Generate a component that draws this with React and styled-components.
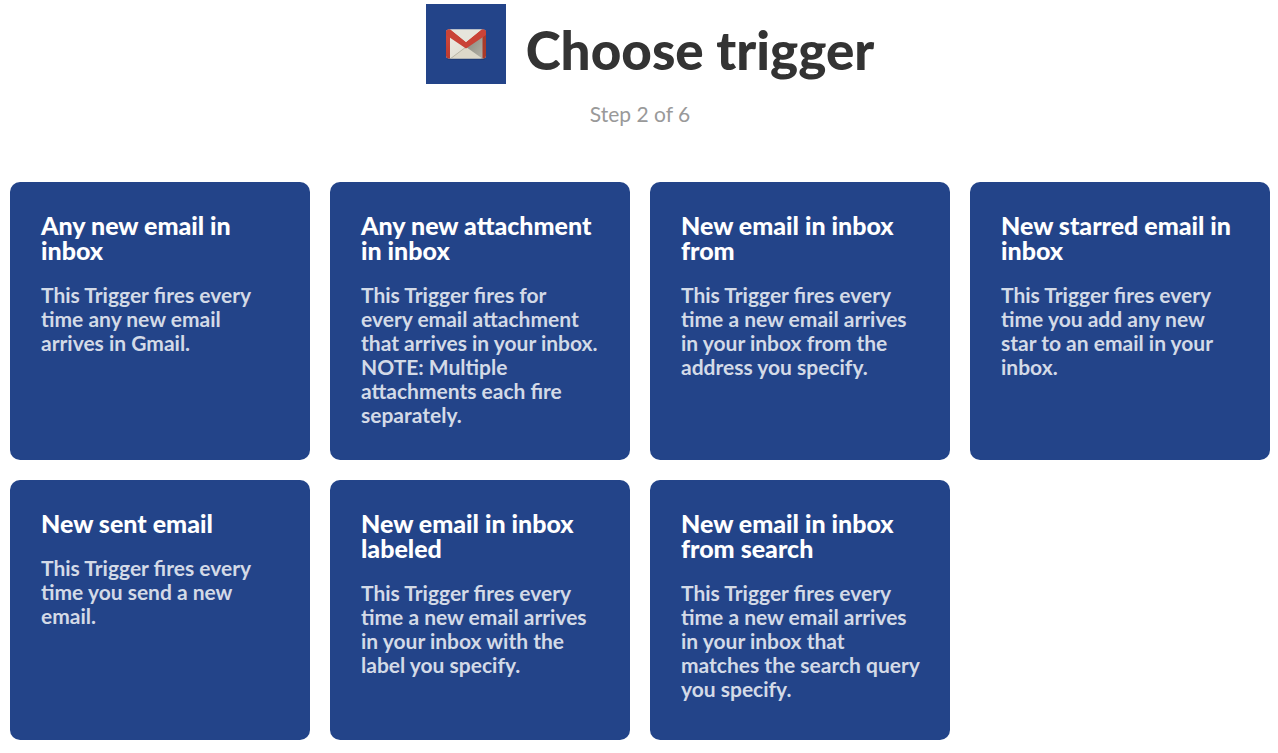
import React from 'react';
import styled, { createGlobalStyle } from 'styled-components';

const GlobalStyle = createGlobalStyle`
  *, *::before, *::after { box-sizing: border-box; }
  body {
    margin: 0;
    background: #fff;
    color: #333;
    font-family: Lato, "Open Sans", sans-serif;
  }
`;

const Page = styled.main`
  padding: 4px 8px 12px 10px;
`;

const Header = styled.header`
  display: flex;
  flex-direction: column;
  align-items: center;
  margin-bottom: 56px;
`;

const Heading = styled.div`
  display: flex;
  align-items: center;
  gap: 20px;
  padding-left: 20px;
`;

const ServiceTile = styled.span`
  display: flex;
  align-items: center;
  justify-content: center;
  width: 80px;
  height: 80px;
  background: #234489;
`;

const Title = styled.h1`
  margin: 0;
  padding-top: 12px;
  font-size: 53px;
  line-height: 64px;
  font-weight: 900;
`;

const Step = styled.p`
  margin: 18px 0 0;
  font-size: 21px;
  line-height: 24px;
  color: #999;
`;

const TriggerGrid = styled.ul`
  display: grid;
  grid-template-columns: repeat(4, minmax(0, 1fr));
  gap: 20px;
  margin: 0;
  padding: 0;
  list-style: none;
`;

const TriggerItem = styled.li`
  display: flex;
`;

const TriggerCard = styled.a`
  flex: 1;
  min-height: 260px;
  padding: 31px 30px 33px 31px;
  border-radius: 10px;
  background: #234489;
  color: #fff;
  text-decoration: none;
`;

const TriggerName = styled.h2`
  margin: 0 0 20px;
  font-size: 25px;
  line-height: 25px;
  font-weight: 900;
`;

const TriggerText = styled.p`
  margin: 0;
  font-size: 21px;
  line-height: 24px;
  font-weight: 700;
  color: #d3dae7;
`;

const triggers = [
  {
    name: 'Any new email in inbox',
    text: 'This Trigger fires every time any new email arrives in Gmail.',
  },
  {
    name: 'Any new attachment in inbox',
    text: 'This Trigger fires for every email attachment that arrives in your inbox. NOTE: Multiple attachments each fire separately.',
  },
  {
    name: 'New email in inbox from',
    text: 'This Trigger fires every time a new email arrives in your inbox from the address you specify.',
  },
  {
    name: 'New starred email in inbox',
    text: 'This Trigger fires every time you add any new star to an email in your inbox.',
  },
  {
    name: 'New sent email',
    text: 'This Trigger fires every time you send a new email.',
  },
  {
    name: 'New email in inbox labeled',
    text: 'This Trigger fires every time a new email arrives in your inbox with the label you specify.',
  },
  {
    name: 'New email in inbox from search',
    text: 'This Trigger fires every time a new email arrives in your inbox that matches the search query you specify.',
  },
];

function GmailIcon() {
  return (
    <svg width="40" height="32" viewBox="0 0 40 32" role="img" aria-label="Gmail">
      <defs>
        <linearGradient id="paper" x1="0" y1="0" x2="1" y2="1">
          <stop offset="0" stopColor="#efeee6" />
          <stop offset="1" stopColor="#d9d6c8" />
        </linearGradient>
        <linearGradient id="shade" x1="0" y1="0" x2="1" y2="1">
          <stop offset="0" stopColor="#85857b" />
          <stop offset="1" stopColor="#b5b3a8" />
        </linearGradient>
        <linearGradient id="side" x1="0" y1="0" x2="0" y2="1">
          <stop offset="0" stopColor="#d04a3f" />
          <stop offset="1" stopColor="#bd3a2e" />
        </linearGradient>
        <clipPath id="envelope">
          <rect x="0" y="1.500" width="40" height="29" rx="3" />
        </clipPath>
      </defs>
      <rect x="1" y="29.500" width="38" height="2" rx="1" fill="#1b3568" />
      <g clipPath="url(#envelope)">
        <rect y="1" width="40" height="30" fill="url(#paper)" />
        <path d="M4 31 20 19 36 31Z" fill="#dcd8c9" />
        <path d="M37 6v25L20 19Z" fill="url(#shade)" />
        <path d="M4 31 20 19" stroke="#b9b5a5" strokeWidth="1" />
        <path d="M0 1h4v30H0Z" fill="url(#side)" />
        <path d="M36.500 1H40v30h-3.500Z" fill="#a83a2a" />
        <path d="M0 1h4L20 14 36 1h4v6L20 20.500 0 7Z" fill="#c94337" />
        <path d="M4 1h32L20 14Z" fill="#e6e5dc" />
      </g>
    </svg>
  );
}

export default function App() {
  return (
    <>
      <GlobalStyle />
      <Page>
        <Header>
          <Heading>
            <ServiceTile>
              <GmailIcon />
            </ServiceTile>
            <Title>Choose trigger</Title>
          </Heading>
          <Step>Step 2 of 6</Step>
        </Header>
        <TriggerGrid>
          {triggers.map(({ name, text }) => (
            <TriggerItem key={name}>
              <TriggerCard href="#">
                <TriggerName>{name}</TriggerName>
                <TriggerText>{text}</TriggerText>
              </TriggerCard>
            </TriggerItem>
          ))}
        </TriggerGrid>
      </Page>
    </>
  );
}
